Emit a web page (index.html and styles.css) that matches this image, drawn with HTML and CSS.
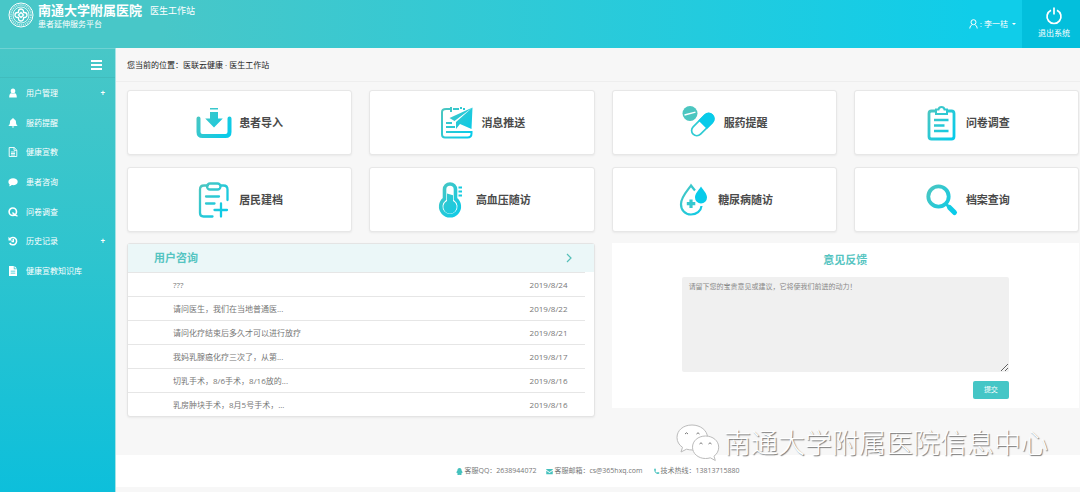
FILE: index.html
```
<!DOCTYPE html>
<html lang="zh-CN">
<head>
<meta charset="utf-8">
<title>医生工作站</title>
<meta name="viewport" content="width=device-width, initial-scale=1">
<link rel="stylesheet" href="styles.css">
</head>
<body>
<svg class="defs" aria-hidden="true">
  <defs>
    <linearGradient id="tint" gradientUnits="userSpaceOnUse" x1="3" y1="6" x2="33" y2="28">
      <stop offset="0" stop-color="#4cc6c0"/>
      <stop offset="1" stop-color="#08cbea"/>
    </linearGradient>
  </defs>
</svg>

<header class="topbar">
  <div class="brand">
    <svg class="brand-logo" viewBox="0 0 26 26" fill="none" stroke="#fff" aria-hidden="true">
      <circle cx="13" cy="13" r="12" stroke-width="1"/>
      <circle cx="13" cy="13" r="10" stroke-width="1.800" stroke-dasharray="1.200 .9" opacity=".6"/>
      <circle cx="13" cy="13" r="8" stroke-width=".8"/>
      <path stroke-width="1.300" d="M10.500 10.500V9.500a2.500 2.500 0 0 1 5 0v1h1a2.500 2.500 0 0 1 0 5h-1v1a2.500 2.500 0 0 1-5 0v-1h-1a2.500 2.500 0 0 1 0-5zM13 10.500 15.500 13 13 15.500 10.500 13z"/>
    </svg>
    <div class="brand-text">
      <div class="brand-line"><strong>南通大学附属医院</strong><span>医生工作站</span></div>
      <div class="brand-sub">患者延伸服务平台</div>
    </div>
  </div>
  <div class="account">
    <button class="user" type="button">
      <svg viewBox="0 0 9 10" fill="none" stroke="#fff" aria-hidden="true"><circle cx="4.500" cy="3.200" r="2.500"/><path d="M.8 9.500c.2-2.200 1.200-3.300 2.400-3.800M8.200 9.500C8 7.300 7 6.200 5.800 5.700"/></svg>
      <span>: 李一桔</span>
      <i class="caret"></i>
    </button>
    <button class="logout" type="button">
      <svg viewBox="0 0 18 18" fill="none" stroke="#fff" stroke-width="1.700" aria-hidden="true"><path d="M6 3.200a7 7 0 1 0 6 0M9 .5v7"/></svg>
      <span>退出系统</span>
    </button>
  </div>
</header>

<div class="shell">
  <aside class="sidebar">
    <div class="toggle-row">
      <button class="toggle" type="button" aria-label="菜单"><i></i><i></i><i></i></button>
    </div>
    <nav>
      <ul class="menu">
        <li><a href="#"><svg viewBox="0 0 10 10"><path d="M5 .5c1.500 0 2.300 1.100 2.300 2.400S6.500 5.500 5 5.500 2.700 4.200 2.700 2.900 3.500.5 5 .5zM1.200 9.500c0-2.600.6-4.200 2.100-4.300.9 1 2.500 1 3.400 0 1.500.1 2.100 1.700 2.100 4.300z"/></svg><span>用户管理</span><b>+</b></a></li>
        <li><a href="#"><svg viewBox="0 0 10 10"><path d="M5 0c.5 0 .7.300.7.900C7.300 1.300 8 2.500 8 4c0 2 .5 2.800 1.700 4H.3C1.500 6.800 2 6 2 4 2 2.500 2.700 1.300 4.300.9 4.300.3 4.500 0 5 0zM3.800 8.500h2.400c-.2 1.500-2.200 1.500-2.400 0z"/></svg><span>服药提醒</span></a></li>
        <li><a href="#"><svg viewBox="0 0 10 10" stroke="#fff" stroke-width=".9"><path fill="none" d="M1.200.5h5l2.600 2.600v6.400H1.200zM6 .5v2.800h2.800M3 5h4M3 6.500h4M3 8h4"/></svg><span>健康宣教</span></a></li>
        <li><a href="#"><svg viewBox="0 0 10 10"><path d="M5.100 1.200C7.700 1.200 9.700 2.700 9.700 4.700S7.700 8.200 5.100 8.200c-.5 0-.9 0-1.300-.1C2.900 8.900 1.900 9.300.9 9.300c.5-.5.8-1 .8-1.800C.8 6.800.4 5.800.4 4.700.4 2.700 2.500 1.200 5.100 1.200z"/></svg><span>患者咨询</span></a></li>
        <li><a href="#"><svg viewBox="0 0 10 10" stroke="#fff" stroke-width="1.600"><path fill="none" d="M8.500 4.700A3.700 3.700 0 1 1 1.100 4.700a3.700 3.700 0 0 1 7.400 0zM4.300 6c1.500-.3 2.200 2.600 5.200 3"/></svg><span>问卷调查</span></a></li>
        <li><a href="#"><svg viewBox="0 0 10 10" stroke="#fff" stroke-width="1.500"><path fill="none" d="M2 2.800a3.700 3.700 0 1 1-.3 4.200M5.300 3v2.400H3.500"/><path stroke="none" d="M.5.800v3.600h3.600z"/></svg><span>历史记录</span><b>+</b></a></li>
        <li><a href="#"><svg viewBox="0 0 10 10"><path fill-rule="evenodd" d="M1 0h4.800v3.300H9V10H1zM6.500 0 9 2.600H6.500zM2.700 4.800v.8h4.600v-.8zm0 2v.8h4.600v-.8z"/></svg><span>健康宣教知识库</span></a></li>
      </ul>
    </nav>
  </aside>

  <div class="page">
    <div class="crumbs">您当前的位置：医联云健康 · 医生工作站</div>
    <main class="content">
      <section class="cards">
        <a class="card" href="#">
          <svg viewBox="0 0 36 36"><path fill="url(#tint)" d="M14 3h8v1.500h-8zM14 7h8v6.500h4.800L18 22.500 9.200 13.500H14z"/><path fill="none" stroke="url(#tint)" stroke-width="4" stroke-linecap="round" d="M2.500 13.500v13.500q0 4 4 4h23q4 0 4-4V13.500"/></svg>
          <span>患者导入</span>
        </a>
        <a class="card" href="#">
          <svg viewBox="0 0 36 36" fill="none" stroke="url(#tint)" stroke-width="2"><path d="M12.500 4H8Q4 4 4 7V29.500q0 3 3 3h22.500q4 0 4-4v-1.500H8M15 4h6M25 4h2M13 2v5M23 2v2M8 18h6M8 22h9"/><path fill="url(#tint)" stroke="none" d="M34.500 2.500 11.500 13l5 3 12-9zM34.500 2.500 18 17v7l4-5 11.500 5z"/></svg>
          <span>消息推送</span>
        </a>
        <a class="card" href="#">
          <svg viewBox="0 0 36 36"><circle cx="9" cy="8.500" r="7.500" fill="#4cc6c0"/><path stroke="#fff" stroke-width="1.300" d="m3.500 10 11-2.800"/><g transform="rotate(45 21.500 19.500)"><rect x="16.500" y="6" width="10.500" height="27" rx="5.250" fill="none" stroke="#2fcbd3" stroke-width="1.700"/><path fill="#08cbea" d="M15.700 19.500v-8.500a6.050 6.050 0 0 1 12.100 0v8.500z"/></g></svg>
          <span>服药提醒</span>
        </a>
        <a class="card" href="#">
          <svg viewBox="0 0 36 36" fill="none" stroke="url(#tint)" stroke-width="2.800"><path d="M12 6H8.500Q6 6 6 8.500v23Q6 34 8.500 34h20q2.500 0 2.500-2.500v-23Q31 6 28.500 6H25"/><path stroke-width="2" d="M13 4.500h2.500q.5-2.500 3-2.500t3 2.500H24V9H13z"/><path stroke-width="2.400" d="M11 15h14.500M11 20.500h10.500M11 26h14.500"/></svg>
          <span>问卷调查</span>
        </a>
        <a class="card" href="#">
          <svg viewBox="0 0 36 36" fill="none" stroke="url(#tint)" stroke-width="2.300" stroke-linecap="round"><path d="M12 3.500H8q-4 0-4 4V31q0 3.500 3.500 3.500h9M25 3.500h2.500q4 0 4 4V18"/><rect x="11" y="1.500" width="13.500" height="6" rx="3"/><path d="M10 14.500h13M10 21.500h8.500M25 21.500v13M18.500 28h12.500"/></svg>
          <span>居民建档</span>
        </a>
        <a class="card" href="#">
          <svg viewBox="0 0 36 36"><path fill="none" stroke="url(#tint)" stroke-width="3.600" d="M11.500 17V7.500a5.500 5.500 0 0 1 11 0V17a9.300 9.300 0 1 1-11 0z"/><path fill="url(#tint)" d="M14 11.500l6 1.800V19a6.700 6.700 0 1 1-6 0z"/><path stroke="#16cbe0" stroke-width="1.800" d="M25.500 5.500H29M25.500 9.500H29M25.500 13.500H29"/></svg>
          <span>高血压随访</span>
        </a>
        <a class="card" href="#">
          <svg viewBox="0 0 36 36"><path fill="none" stroke="url(#tint)" stroke-width="2.200" d="M20 8.500Q17.500 5.500 16 3.500C13 8 6 15 6 22a10 10 0 0 0 10 10.500c5.500 0 10-3.500 10.500-8.500"/><path fill="#08cbea" d="M26 4.500c-2.500 4-6 7-6 11a6 6 0 0 0 12 0c0-4-3.500-7-6-11z"/><path stroke="#36c8cf" stroke-width="3.200" d="M16 17.500v8.500M11.800 21.700h8.500"/></svg>
          <span>糖尿病随访</span>
        </a>
        <a class="card" href="#">
          <svg viewBox="0 0 36 36" fill="none" stroke="url(#tint)"><circle cx="15.500" cy="14.500" r="10.200" stroke-width="3.800"/><path stroke-width="3" d="m22 21 4 4"/><path stroke-width="5" stroke-linecap="round" d="m26.500 25.500 5 5"/></svg>
          <span>档案查询</span>
        </a>
      </section>

      <section class="panels">
        <div class="panel consult">
          <a class="panel-head" href="#"><h2>用户咨询</h2><svg viewBox="0 0 6 10" fill="none" stroke="#55bfb8" stroke-width="1.200" aria-hidden="true"><path d="m1 1 4 4-4 4"/></svg></a>
          <ul class="consult-list">
            <li><span>???</span><time>2019/8/24</time></li>
            <li><span>请问医生，我们在当地普通医...</span><time>2019/8/22</time></li>
            <li><span>请问化疗结束后多久才可以进行放疗</span><time>2019/8/21</time></li>
            <li><span>我妈乳腺癌化疗三次了，从第...</span><time>2019/8/17</time></li>
            <li><span>切乳手术，8/6手术，8/16放的...</span><time>2019/8/16</time></li>
            <li><span>乳房肿块手术，8月5号手术，...</span><time>2019/8/16</time></li>
          </ul>
        </div>
        <form class="feedback">
          <h2><label for="opinion">意见反馈</label></h2>
          <textarea id="opinion" placeholder="请留下您的宝贵意见或建议，它将使我们前进的动力！"></textarea>
          <button type="button">提交</button>
        </form>
      </section>
    </main>

    <footer class="footer">
      <span><svg viewBox="0 0 8 8"><path d="M4 0c1.700 0 2.400 1.200 2.400 2.900.8 1 1.200 2 .9 2.800-.3.100-.5-.1-.7-.4 0 .6-.2 1-.6 1.400.7.400.6 1.100-.3 1.200-.7.100-1.300 0-1.700-.3-.4.300-1 .4-1.700.3-.9-.1-1-.8-.3-1.200-.4-.4-.6-.8-.6-1.400-.2.300-.4.500-.7.400-.3-.8.100-1.800.9-2.800C1.600 1.200 2.300 0 4 0z"/></svg>客服QQ：2638944072</span>
      <span><svg viewBox="0 0 8 8"><path d="M.3 1h7.400v1L4 4.700.3 2zM.3 3 4 5.600 7.700 3v4H.3z"/></svg>客服邮箱：cs@365hxq.com</span>
      <span><svg viewBox="0 0 8 8"><path d="M1.500.8 2.800.7l.7 1.800-.9.800c.4.900 1 1.600 2 2.100l.8-.9 1.800.7v1.200C5 8.200.6 4.800 1.500.8z"/></svg>技术热线：13813715880</span>
    </footer>
  </div>
</div>

<div class="watermark">
  <svg viewBox="0 0 44 38" aria-hidden="true">
    <path class="bubble" d="M16 1C7 1 1 6.500 1 13.500c0 4 2 7.500 5.500 9.800L5 28l5.500-2.800c2 .6 4 .8 6.500.8 8 0 14.500-5.500 14.500-12.500S24.500 1 16 1z"/>
    <path class="bubble" d="M29.500 12c-7.500 0-13 5-13 11.200s5.500 11.300 13 11.300c1.700 0 3.300-.2 4.800-.7l5 2.700-1.300-4.300c3-2.200 4.700-5.300 4.700-9C42.700 17 37 12 29.500 12z"/>
    <path class="eyes" d="M9 10q1.500-2.500 3 0M20.500 10q1.500-2.500 3 0M23.500 20q1.500-2.500 3 0M32.500 20q1.500-2.500 3 0"/>
  </svg>
  <span>南通大学附属医院信息中心</span>
</div>
</body>
</html>
```

FILE: styles.css
```
* {
  box-sizing: border-box;
}

body {
  margin: 0;
  min-height: 100vh;
  display: flex;
  flex-direction: column;
  position: relative;
  background: #f7f7f7;
  color: #777;
  font: 8px/12px "Open Sans", "Noto Sans CJK SC", sans-serif;
}

a {
  color: inherit;
  text-decoration: none;
}

ul {
  list-style: none;
  margin: 0;
  padding: 0;
}

button {
  border: 0;
  padding: 0;
  background: none;
  color: inherit;
  font: inherit;
  cursor: pointer;
}

svg {
  flex: none;
  display: block;
}

.defs {
  position: absolute;
  width: 0;
  height: 0;
}

/* Top bar */
.topbar {
  display: flex;
  justify-content: space-between;
  height: 48px;
  background: linear-gradient(90deg, #48c7c8 15%, #10cde9 90%);
  color: #fff;
}

.brand {
  display: flex;
  gap: 4px;
  padding: 2px 0 0 8px;
}

.brand-logo {
  width: 26px;
  height: 26px;
}

.brand-line {
  display: flex;
  align-items: center;
  gap: 8px;
  height: 16px;
}

.brand-line strong {
  font-size: 13px;
}

.brand-line span {
  font-size: 9px;
  padding-top: 2px;
}

.account {
  display: flex;
}

.user {
  display: flex;
  align-items: center;
  gap: 2px;
  padding-right: 6px;
}

.user svg {
  width: 9px;
  height: 10px;
}

.caret {
  margin-left: 2px;
  border: 2px solid transparent;
  border-top-color: #fff;
  border-bottom: 0;
}

.logout {
  width: 58px;
  padding: 0 0 2px 6px;
  display: flex;
  flex-direction: column;
  align-items: center;
  justify-content: center;
  gap: 2px;
  background: #03bfdc;
}

.logout svg {
  width: 18px;
  height: 18px;
}

/* Sidebar */
.shell {
  flex: 1;
  display: flex;
}

.sidebar {
  flex: none;
  width: 116px;
  border-right: 1px solid #a5e3e6;
  background: linear-gradient(#48c7c7, #2cc4cf 50%, #0dbfdb);
  color: #fff;
}

.toggle-row {
  display: flex;
  justify-content: flex-end;
  align-items: center;
  height: 30px;
  padding: 4px 13px 0 0;
  border-top: 1px solid #6fd2d3;
  border-bottom: 1px solid #41bcbd;
}

.toggle {
  display: grid;
  gap: 2px;
  width: 11px;
}

.toggle i {
  height: 2px;
  background: #fff;
}

.menu {
  display: grid;
  grid-auto-rows: 1fr;
  height: 208px;
}

.menu a {
  display: flex;
  align-items: center;
  gap: 8px;
  height: 100%;
  padding: 0 10px 0 8px;
}

.menu svg {
  width: 10px;
  height: 10px;
  fill: #fff;
}

.menu b {
  margin-left: auto;
}

/* Page */
.page {
  flex: 1;
  min-width: 0;
  display: flex;
  flex-direction: column;
}

.crumbs {
  padding: 11px 11px 10px;
  border-bottom: 1px solid #eee;
  color: #222;
}

.content {
  flex: 1;
  padding: 8px 1px 16px 11px;
}

.cards {
  display: grid;
  grid-template-columns: repeat(4, 1fr);
  gap: 12px 17px;
}

.card {
  display: flex;
  align-items: center;
  justify-content: center;
  gap: 7px;
  height: 65px;
  border: 1px solid #e7e7e7;
  border-radius: 3px;
  background: #fff;
  box-shadow: 0 1px 2px #e9e9e9;
  color: #4a4a4a;
  font-size: 11px;
  font-weight: 700;
}

.card svg {
  width: 36px;
  height: 36px;
}

.panels {
  display: grid;
  grid-template-columns: 1fr 1fr;
  align-items: start;
  gap: 17px;
  margin-top: 11px;
}

h2 {
  margin: 0;
  color: #55c4c1;
  font-size: 11px;
  font-weight: 700;
  line-height: 16px;
}

.consult {
  border: 1px solid #e4e4e4;
  border-radius: 3px;
  background: #fff;
  box-shadow: 0 1px 2px #e9e9e9;
}

.panel-head {
  display: flex;
  align-items: center;
  justify-content: space-between;
  height: 28px;
  padding: 0 22px 0 26px;
  background: #ebf7f8;
}

.panel-head svg {
  width: 6px;
  height: 10px;
}

.consult-list li {
  display: flex;
  align-items: center;
  justify-content: space-between;
  height: 24px;
  margin-right: 9px;
  padding: 0 17px 0 45px;
  border-top: 1px solid #e6e6e6;
}

.feedback {
  display: flex;
  flex-direction: column;
  align-items: center;
  gap: 9px;
  padding: 9px 15%;
  background: #fff;
}

.feedback textarea {
  display: block;
  width: 100%;
  height: 95px;
  padding: 4px 7px;
  border: 0;
  border-radius: 2px;
  background: #f0f0f0;
  font: inherit;
  font-size: 7px;
}

.feedback textarea::placeholder {
  color: #888;
}

.feedback button {
  align-self: flex-end;
  width: 36px;
  height: 18px;
  border-radius: 2px;
  background: #45c6c6;
  color: #fff;
  font-size: 7px;
}

/* Footer */
.footer {
  display: flex;
  justify-content: center;
  align-items: center;
  gap: 10px;
  height: 32px;
  margin-bottom: 5px;
  background: #fff;
  font-size: 7px;
}

.footer span {
  display: flex;
  align-items: center;
  gap: 1px;
}

.footer svg {
  width: 7px;
  height: 7px;
  fill: #45c1bd;
}

/* Watermark laid over the page */
.watermark {
  position: absolute;
  right: 32px;
  bottom: 29px;
  display: flex;
  align-items: center;
  gap: 4px;
  color: #fff;
  font-size: 27px;
  font-weight: 300;
  line-height: 40px;
  text-shadow: 1px 1px 1px #777;
  pointer-events: none;
}

.watermark svg {
  width: 44px;
  height: 38px;
}

.bubble {
  fill: #fff;
  stroke: #bbb;
  stroke-width: 1;
}

.eyes {
  fill: none;
  stroke: #777;
  stroke-width: 1;
}
```
